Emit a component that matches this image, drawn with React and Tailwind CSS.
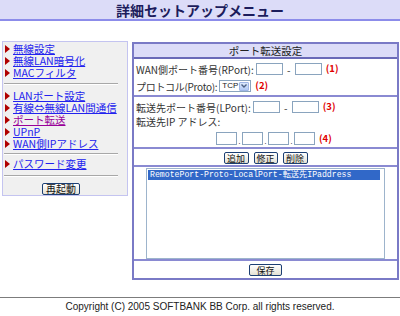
import React from "react";

const jp = { fontFamily: '"Noto Sans CJK JP", "Noto Sans", sans-serif' };

const SideLink = ({ label, visited }) => (
  <div className="flex items-center h-[12px]">
    <span className="ml-[2px] mr-[3px] w-0 h-0 border-y-[4px] border-y-transparent border-l-[5px] border-l-[#b00000]" />
    <span
      className={`text-[10.5px] leading-[12px] underline whitespace-nowrap ${
        visited ? "text-[#990099]" : "text-[#2222ee]"
      }`}
    >
      {label}
    </span>
  </div>
);

const Rule = ({ className }) => (
  <div className={`w-[114px] ml-[1px] border-t border-b border-t-[#a8a8a8] border-b-white ${className}`} />
);

const XpButton = ({ children, className }) => (
  <div
    className={`flex items-center justify-center h-[12px] rounded-[2px] border border-[#1c3f73] bg-gradient-to-b from-white to-[#e4e1d4] text-[9px] leading-none text-[#111] ${className}`}
  >
    {children}
  </div>
);

const TextBox = ({ className }) => (
  <div className={`border border-[#8aa4be] bg-white ${className}`} />
);

const Num = ({ children, className = "" }) => (
  <span className={`text-[9.5px] font-bold text-[#e00000] leading-none ${className}`}>{children}</span>
);

export default function App() {
  return (
    <div className="w-[400px] h-[316px] bg-white overflow-hidden text-[#333]" style={jp}>
      {/* title bar */}
      <div className="h-[21px] bg-[#dcdcf8] border-b-2 border-[#8c8cea] flex items-center justify-center">
        <h1 className="text-[14px] font-bold leading-none text-[#1c1c5c]">詳細セットアップメニュー</h1>
      </div>

      <div className="flex items-start mt-[20px]">
        {/* sidebar */}
        <div className="ml-[2px] w-[126px] h-[155px] border border-[#c4c4f0] bg-[#f0f0f0] pt-[1px]">
          <SideLink label="無線設定" />
          <SideLink label="無線LAN暗号化" />
          <SideLink label="MACフィルタ" />
          <Rule className="mt-[4px] mb-[5px]" />
          <SideLink label="LANポート設定" />
          <SideLink label="有線⇔無線LAN間通信" />
          <SideLink label="ポート転送" visited />
          <SideLink label="UPnP" />
          <SideLink label="WAN側IPアドレス" />
          <Rule className="mt-[3px] mb-[3px]" />
          <SideLink label="パスワード変更" />
          <Rule className="mt-[5px]" />
          <div className="w-[114px] ml-[1px] flex justify-center mt-[6px]">
            <XpButton className="w-[38px] text-[10px]">再起動</XpButton>
          </div>
        </div>

        {/* main panel */}
        <div className="ml-[4px] mt-[1px] w-[267px] border-2 border-[#7a7ac6] text-[10px]">
          <div className="h-[15px] bg-[#dcdcf8] border-b-2 border-[#6a6ab8] flex items-center justify-center text-[10.5px] text-[#222]">
            ポート転送設定
          </div>

          <div className="border-b-2 border-[#8a8ad2] pl-[2px] pt-[4px] pb-[3px]">
            <div className="flex items-center h-[12px] whitespace-nowrap">
              <span>WAN側ポート番号(RPort):</span>
              <TextBox className="ml-[2px] w-[27px] h-[12px]" />
              <span className="w-[12px] text-center">-</span>
              <TextBox className="w-[27px] h-[12px]" />
              <Num className="ml-[4px]">(1)</Num>
            </div>
            <div className="flex items-center h-[12px] mt-[5px] whitespace-nowrap">
              <span className="tracking-[-0.3px]">プロトコル(Proto):</span>
              <div className="ml-[2px] w-[32px] h-[12px] border border-[#8aa4be] bg-white flex items-center">
                <span className="text-[8px] ml-[2px] text-[#222]" style={{ fontFamily: '"Liberation Sans", sans-serif' }}>
                  TCP
                </span>
                <div className="ml-auto mr-[1px] w-[10px] h-[9px] rounded-[1px] bg-gradient-to-b from-[#dce8fb] to-[#b0c8f4] border border-[#9fb6e6] flex items-center justify-center">
                  <svg width="6" height="4" viewBox="0 0 6 4">
                    <path d="M0.5 0.5 L3 3 L5.5 0.5" fill="none" stroke="#4d6185" strokeWidth="1.4" />
                  </svg>
                </div>
              </div>
              <Num className="ml-[4px]">(2)</Num>
            </div>
          </div>

          <div className="border-b-2 border-[#8a8ad2] pl-[2px] pt-[4px] pb-[2px]">
            <div className="flex items-center h-[12px] whitespace-nowrap">
              <span>転送先ポート番号(LPort):</span>
              <TextBox className="ml-[2px] w-[27px] h-[12px]" />
              <span className="w-[12px] text-center">-</span>
              <TextBox className="w-[27px] h-[12px]" />
              <Num className="ml-[4px]">(3)</Num>
            </div>
            <div className="flex items-center h-[12px] mt-[2px] whitespace-nowrap">
              <span>転送先IP アドレス:</span>
            </div>
            <div className="flex items-end h-[13px] mt-[5px] pl-[80px]">
              <TextBox className="w-[21px] h-[13px]" />
              <span className="w-[5px] text-[7px] leading-none text-center">.</span>
              <TextBox className="w-[21px] h-[13px]" />
              <span className="w-[5px] text-[7px] leading-none text-center">.</span>
              <TextBox className="w-[21px] h-[13px]" />
              <span className="w-[5px] text-[7px] leading-none text-center">.</span>
              <TextBox className="w-[21px] h-[13px]" />
              <Num className="ml-[4px] self-center">(4)</Num>
            </div>
          </div>

          <div className="border-b-2 border-[#8a8ad2] flex justify-center gap-[5px] pt-[3px] pb-[1px]">
            <XpButton className="w-[25px]">追加</XpButton>
            <XpButton className="w-[24px]">修正</XpButton>
            <XpButton className="w-[25px]">削除</XpButton>
          </div>

          <div className="border-b-2 border-[#8a8ad2] pt-[1px]">
            <div className="mx-auto w-[239px] h-[91px] border border-[#9db4cc] bg-white p-[1px]">
              <div
                className="w-[232px] h-[10px] bg-[#3168c8] text-white text-[8.2px] leading-[10px] pl-[2px] whitespace-nowrap overflow-hidden"
                style={{ fontFamily: '"Liberation Mono", "Noto Sans CJK JP", monospace' }}
              >
                RemotePort-Proto-LocalPort-転送先IPaddress
              </div>
            </div>
          </div>

          <div className="flex justify-center pt-[3px] pb-[2px]">
            <XpButton className="w-[33px] h-[11px]">保存</XpButton>
          </div>
        </div>
      </div>

      {/* footer */}
      <div className="mt-[17px] border-t border-[#7c7c7c]" />
      <p
        className="mt-[3px] text-center text-[10px] leading-[12px] text-[#222]"
        style={{ fontFamily: '"Liberation Sans", sans-serif' }}
      >
        Copyright (C) 2005 SOFTBANK BB Corp. all rights reserved.
      </p>
    </div>
  );
}
